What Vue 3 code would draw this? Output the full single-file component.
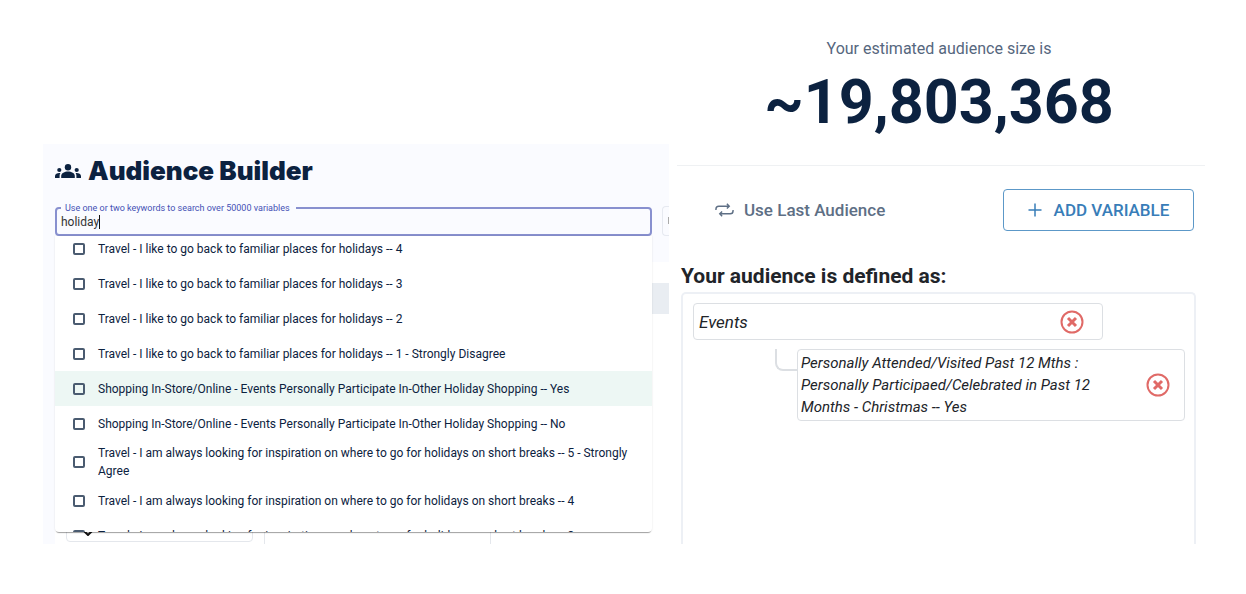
<script setup>
import { ref } from 'vue'

const query = ref('holiday')
const familiar = 'Travel - I like to go back to familiar places for holidays -- '
const inspiration = 'Travel - I am always looking for inspiration on where to go for holidays on short breaks -- '
const participate = 'Shopping In-Store/Online - Events Personally Participate In-Other Holiday Shopping -- '

const options = ref([
  { label: familiar + '4', checked: false },
  { label: familiar + '3', checked: false },
  { label: familiar + '2', checked: false },
  { label: familiar + '1 - Strongly Disagree', checked: false },
  { label: participate + 'Yes', checked: false, active: true },
  { label: participate + 'No', checked: false },
  { label: inspiration + '5 - Strongly Agree', checked: false },
  { label: inspiration + '4', checked: false },
  { label: inspiration + '3', checked: false },
])
</script>

<template>
  <main class="page">
    <section class="builder">
      <header class="builder-head">
        <h1 class="title">
          <svg class="people" viewBox="0 0 26 14" aria-hidden="true">
            <circle cx="13" cy="3.2" r="3.2" />
            <path d="M6.200 14v-2.200c0-2.600 3.400-4.400 6.800-4.400s6.800 1.800 6.800 4.400V14z" />
            <circle cx="4.300" cy="6" r="2.100" />
            <circle cx="21.700" cy="6" r="2.100" />
            <path d="M0 14v-1.900C0 10.100 2.200 9 4.300 9q.6 0 1.100.1-.8 1.100-.8 2.700V14z" />
            <path d="M26 14v-1.900C26 10.100 23.800 9 21.700 9q-.6 0-1.100.1.8 1.100.8 2.700V14z" />
          </svg>
          Audience Builder
        </h1>
        <div class="filters">
          <div class="search">
            <fieldset class="outline">
              <legend><label for="keywords">Use one or two keywords to search over 50000 variables</label></legend>
              <div class="entry">
                <input id="keywords" v-model="query" type="text" autocomplete="off" />
                <span class="caret"></span>
              </div>
            </fieldset>
            <div class="menu">
              <ul class="options">
                <li v-for="(option, i) in options" :key="i" :class="{ active: option.active }">
                  <input :id="'option-' + i" v-model="option.checked" type="checkbox" />
                  <label :for="'option-' + i">{{ option.label }}</label>
                </li>
              </ul>
            </div>
          </div>
          <div class="next-field"><span></span></div>
        </div>
      </header>
      <div class="results">
        <div class="band"></div>
        <div class="fields">
          <div class="field first">
            <svg viewBox="0 0 10 6" aria-hidden="true"><path d="M1 1l4 4 4-4" /></svg>
          </div>
          <div class="field second"></div>
        </div>
      </div>
    </section>

    <section class="summary">
      <div class="size">
        <p class="caption">Your estimated audience size is</p>
        <p class="number">~19,803,368</p>
      </div>
      <div class="actions">
        <button class="last" type="button">
          <svg viewBox="0 0 20 14" aria-hidden="true">
            <path d="M1 7V6a3 3 0 0 1 3-3h11M12.500.5 15 3l-2.500 2.500M19 7v1a3 3 0 0 1-3 3H5M7.500 8.500 5 11l2.500 2.500" />
          </svg>
          Use Last Audience
        </button>
        <button class="add" type="button">
          <svg viewBox="0 0 14 14" aria-hidden="true"><path d="M7 .5v13M.5 7h13" /></svg>
          ADD VARIABLE
        </button>
      </div>
      <h2>Your audience is defined as:</h2>
      <div class="definition">
        <div class="group">
          <span>Events</span>
          <button class="remove" type="button" aria-label="Remove Events">
            <svg viewBox="0 0 24 24" aria-hidden="true">
              <circle cx="12" cy="12" r="10.500" />
              <path d="M8 8l8 8M16 8l-8 8" />
            </svg>
          </button>
        </div>
        <div class="branch">
          <div class="elbow"></div>
          <div class="rule">
            <span>Personally Attended/Visited Past 12 Mths : Personally Participaed/Celebrated in Past 12 Months - Christmas -- Yes</span>
            <button class="remove" type="button" aria-label="Remove Christmas rule">
              <svg viewBox="0 0 24 24" aria-hidden="true">
                <circle cx="12" cy="12" r="10.500" />
                <path d="M8 8l8 8M16 8l-8 8" />
              </svg>
            </button>
          </div>
        </div>
      </div>
    </section>
  </main>
</template>

<style>
body {
  margin: 0;
  background: #fff;
}
</style>

<style scoped>
* {
  box-sizing: border-box;
}
.page {
  display: grid;
  grid-template-columns: 626fr 528fr;
  gap: 8px;
  min-height: 100vh;
  padding: 0 41px 50px 43px;
  font-family: Roboto, "Liberation Sans", sans-serif;
  color: #0c2240;
}
h1, h2, p, ul {
  margin: 0;
  padding: 0;
}
button {
  padding: 0;
  border: 0;
  background: none;
  font-family: inherit;
}
.builder {
  display: flex;
  flex-direction: column;
  min-width: 0;
  margin-top: 144px;
  padding-left: 12px;
  overflow: hidden;
  background: #fafbff;
}
.builder-head {
  height: 118px;
  padding-top: 10px;
}
.title {
  display: flex;
  align-items: center;
  gap: 7px;
  font-family: Inter, Roboto, sans-serif;
  font-size: 26px;
  line-height: 34px;
  font-weight: 900;
  white-space: nowrap;
}
.people {
  width: 26px;
  height: 14px;
  fill: #0c2240;
}
.filters {
  display: flex;
  gap: 10px;
  margin-top: 14px;
}
.search {
  position: relative;
  flex: 1;
  min-width: 0;
}
.outline {
  height: 34px;
  margin: 0;
  padding: 0 4px;
  border: 2px solid #8890cf;
  border-radius: 4px;
  min-width: 0;
}
legend {
  height: 12px;
  padding: 0 6px 0 4px;
  font-size: 9px;
  line-height: 12px;
  color: #4551b5;
}
.entry {
  display: flex;
  align-items: center;
  height: 16px;
}
.entry input {
  field-sizing: content;
  padding: 0;
  border: 0;
  outline: 0;
  background: none;
  font-family: inherit;
  font-size: 12px;
  line-height: 14px;
  color: #333;
}
.caret {
  width: 1px;
  height: 14px;
  background: #111;
}
.menu {
  position: absolute;
  z-index: 1;
  top: 34px;
  left: 0;
  right: 0;
  height: 296px;
  overflow: hidden;
  border-radius: 0 0 4px 4px;
  background: #fff;
  box-shadow: 0 2px 1px -1px rgba(0, 0, 0, 0.35), 0 0 2px rgba(0, 0, 0, 0.12);
}
.options {
  margin-top: -5px;
  list-style: none;
}
.options li {
  display: flex;
  align-items: center;
  gap: 13px;
  min-height: 35px;
  padding: 3px 12px 3px 18px;
  font-size: 12px;
  line-height: 18px;
  color: #0c2240;
}
.options li.active {
  background: #edf7f4;
}
.options input {
  flex: none;
  appearance: none;
  width: 12px;
  height: 12px;
  margin: 0;
  border: 2px solid #4a5b70;
  border-radius: 2px;
}
.next-field {
  width: 7px;
  height: 30px;
  margin-top: 4px;
  padding: 10px 0 0 5px;
  border: 1px solid #e6e9f0;
  border-right: 0;
  border-radius: 4px 0 0 4px;
}
.next-field span {
  display: block;
  width: 1px;
  height: 7px;
  background: #aaa;
}
.results {
  flex: 1;
  padding-top: 21px;
  background: #fff;
}
.band {
  height: 31px;
  background: #e9edf2;
}
.fields {
  display: flex;
  align-items: flex-start;
  gap: 11px;
  padding: 190px 0 0 11px;
}
.field {
  border: 1px solid #e4e7ec;
  border-radius: 4px;
}
.first {
  width: 187px;
  height: 38px;
  padding-left: 16px;
}
.first svg {
  display: block;
  width: 10px;
  height: 6px;
  margin-top: 25px;
  fill: none;
  stroke: #111;
  stroke-width: 2;
}
.second {
  width: 227px;
  height: 40px;
  border-bottom: 0;
  border-radius: 4px 4px 0 0;
}
.summary {
  display: flex;
  flex-direction: column;
  min-width: 0;
}
.size {
  height: 166px;
  padding: 36px 4px 0 0;
  border-bottom: 1px solid #eff1f3;
  text-align: center;
}
.caption {
  font-size: 16px;
  line-height: 26px;
  color: #56677e;
}
.number {
  margin-top: 4px;
  font-size: 61px;
  line-height: 72px;
  font-weight: 700;
}
.actions {
  display: flex;
  align-items: center;
  justify-content: space-between;
  padding: 23px 11px 0 38px;
}
.actions button {
  display: flex;
  align-items: center;
  font-size: 17px;
  line-height: 20px;
  font-weight: 500;
  white-space: nowrap;
}
.actions svg {
  fill: none;
  stroke: currentColor;
  stroke-width: 1.500;
}
.last {
  gap: 10px;
  color: #5e6f85;
}
.last svg {
  width: 19px;
  height: 14px;
}
.actions .add {
  justify-content: center;
  gap: 12px;
  width: 191px;
  height: 42px;
  border: 1px solid #5c98c8;
  border-radius: 4px;
  color: #387db8;
}
.add svg {
  width: 14px;
  height: 14px;
}
h2 {
  margin: 32px 0 0 4px;
  font-size: 21px;
  line-height: 26px;
  font-weight: 700;
  color: #212429;
}
.definition {
  flex: 1;
  margin: 3px 9px 0 4px;
  padding: 9px 9px 0 10px;
  border: 2px solid #edf0f5;
  border-bottom: 0;
  border-radius: 5px 5px 0 0;
  font-style: italic;
  color: #212429;
}
.group,
.rule {
  display: flex;
  align-items: center;
  justify-content: space-between;
  border: 1px solid #dcdfe3;
  border-radius: 4px;
}
.group {
  width: calc(100% - 82px);
  height: 37px;
  padding: 0 18px 0 5px;
  font-size: 17px;
}
.branch {
  display: flex;
  padding: 9px 0 0 82px;
}
.elbow {
  width: 22px;
  height: 22px;
  border: solid #dcdfe3;
  border-width: 0 0 2px 2px;
  border-radius: 0 0 0 8px;
}
.rule {
  flex: 1;
  padding: 2px 14px 2px 3px;
  font-size: 15px;
  line-height: 22px;
}
.rule span {
  width: 308px;
}
.remove {
  flex: none;
  width: 24px;
  height: 24px;
}
.remove svg {
  display: block;
  fill: none;
  stroke: #e06a67;
  stroke-width: 2;
}
.remove path {
  stroke-width: 3;
}
</style>
